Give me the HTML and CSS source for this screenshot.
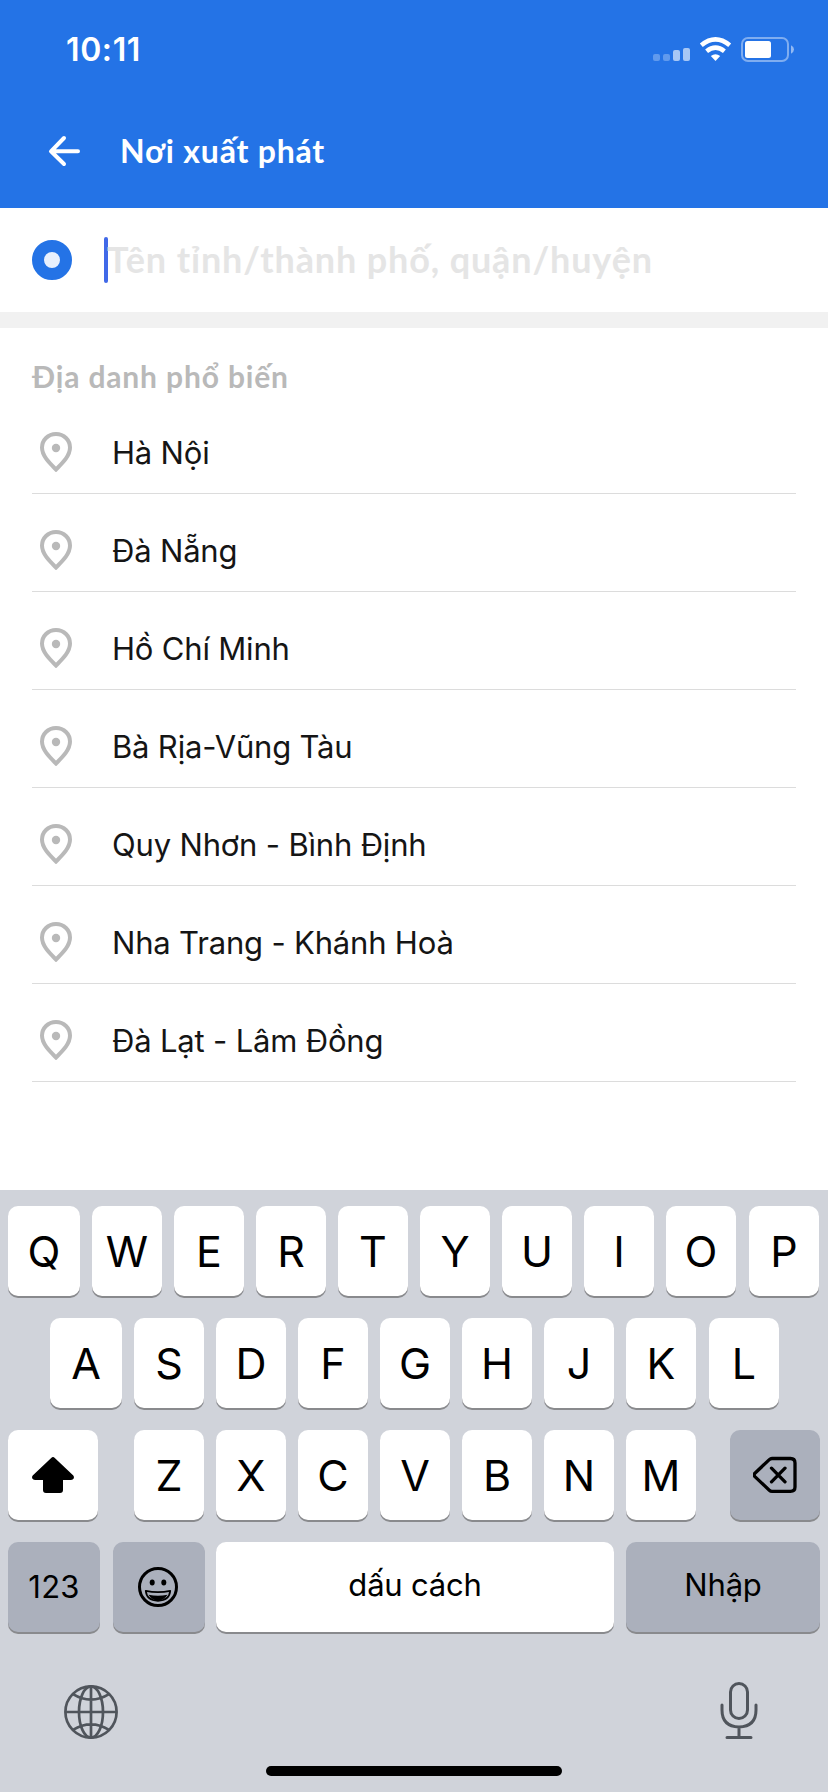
FILE: index.html
```html
<!DOCTYPE html>
<html lang="vi">
<head>
<meta charset="utf-8">
<title>Nơi xuất phát</title>
<link rel="stylesheet" href="styles.css">
</head>
<body>
<svg class="defs" aria-hidden="true">
  <symbol id="pin" viewBox="0 0 32 40">
    <path d="M16 2C8 2 2 8 2 15.600C2 24 9.500 31 16 37.500C22.500 31 30 24 30 15.600C30 8 24 2 16 2Z" fill="none" stroke="#b9b9b9" stroke-width="4"/>
    <circle cx="16" cy="16" r="4.200" fill="#b9b9b9"/>
  </symbol>
</svg>
<div class="screen">
  <header class="header">
    <div class="status">
      <span class="clock">10:11</span>
      <svg class="indicators" width="144" height="28" viewBox="0 0 144 28">
        <g fill="#fff">
          <rect x="1" y="18" width="7" height="7" rx="2" opacity=".28"/>
          <rect x="11" y="18" width="7" height="7" rx="2" opacity=".28"/>
          <rect x="21" y="14" width="7" height="11" rx="2" opacity=".6"/>
          <rect x="31" y="12" width="7" height="13" rx="2" opacity=".6"/>
        </g>
        <g fill="none" stroke="#fff" stroke-width="4.600">
          <path d="M49.300 9.300Q63.500-2.400 77.700 9.300"/>
          <path d="M54.600 15.200Q63.500 8 72.400 15.200"/>
        </g>
        <path d="M58.800 20Q63.500 16.600 68.200 20L63.500 25Z" fill="#fff"/>
        <rect x="90" y="2" width="46" height="23" rx="6" fill="none" stroke="#fff" stroke-width="2" opacity=".42"/>
        <rect x="93" y="5" width="26" height="17" rx="2.500" fill="#fff"/>
        <path d="M139 9.300Q142 10.800 142 13.500Q142 16.200 139 17.700Z" fill="#fff" opacity=".5"/>
      </svg>
    </div>
    <div class="titlebar">
      <svg class="back" width="34" height="32" viewBox="0 0 34 32" fill="none" stroke="#fff" stroke-width="4" stroke-linecap="round" stroke-linejoin="round">
        <path d="M16 3L3 16.300L16 29M3.500 16.300H30"/>
      </svg>
      <h1 class="title">Nơi xuất phát</h1>
    </div>
  </header>
  <section class="search">
    <span class="origin"></span>
    <span class="caret"></span>
    <span class="placeholder">Tên tỉnh/thành phố, quận/huyện</span>
  </section>
  <main class="places">
    <h2 class="section">Địa danh phổ biến</h2>
    <ul class="list">
      <li class="place"><svg class="pin"><use href="#pin"/></svg><span>Hà Nội</span></li>
      <li class="place"><svg class="pin"><use href="#pin"/></svg><span>Đà Nẵng</span></li>
      <li class="place"><svg class="pin"><use href="#pin"/></svg><span>Hồ Chí Minh</span></li>
      <li class="place"><svg class="pin"><use href="#pin"/></svg><span>Bà Rịa-Vũng Tàu</span></li>
      <li class="place"><svg class="pin"><use href="#pin"/></svg><span>Quy Nhơn - Bình Định</span></li>
      <li class="place"><svg class="pin"><use href="#pin"/></svg><span>Nha Trang - Khánh Hoà</span></li>
      <li class="place"><svg class="pin"><use href="#pin"/></svg><span>Đà Lạt - Lâm Đồng</span></li>
    </ul>
  </main>
  <section class="keyboard">
    <div class="keys">
      <span class="key first">Q</span><span class="key">W</span><span class="key">E</span><span class="key">R</span><span class="key">T</span><span class="key">Y</span><span class="key">U</span><span class="key">I</span><span class="key">O</span><span class="key last">P</span>
    </div>
    <div class="keys middle">
      <span class="key first">A</span><span class="key">S</span><span class="key">D</span><span class="key">F</span><span class="key">G</span><span class="key">H</span><span class="key">J</span><span class="key">K</span><span class="key last">L</span>
    </div>
    <div class="keys">
      <span class="key shift">
        <svg width="44" height="38" viewBox="0 0 44 38"><path d="M20.200 1.900Q22 .3 23.800 1.900L42.300 19.600Q43.500 21 42.700 22.600Q42 24 40 24H32V34Q32 37 29 37H15Q12 37 12 34V24H4Q2 24 1.300 22.600Q.5 21 1.700 19.600Z"/></svg>
      </span>
      <span class="key">Z</span><span class="key">X</span><span class="key">C</span><span class="key">V</span><span class="key">B</span><span class="key">N</span><span class="key">M</span>
      <span class="key dark delete">
        <svg width="44" height="38" viewBox="0 0 44 38" fill="none" stroke="#000" stroke-width="3.300" stroke-linecap="round" stroke-linejoin="round"><path d="M19 2.500H37.500Q42 2.500 42 7V31Q42 35.300 37.500 35.300H19Q17.500 35.300 16.300 34.200L1.900 20.600Q.4 18.900 1.900 17.200L16.300 3.600Q17.500 2.500 19 2.500ZM18.500 12.200L32 25.800M32 12.200L18.500 25.800"/></svg>
      </span>
    </div>
    <div class="keys">
      <span class="key dark label numbers">123</span>
      <span class="key dark emoji">
        <svg width="42" height="42" viewBox="0 0 42 42"><circle cx="21" cy="21" r="18.500" fill="none" stroke="#000" stroke-width="3"/><ellipse cx="15.200" cy="16.500" rx="2.500" ry="2.900"/><ellipse cx="26.800" cy="16.500" rx="2.500" ry="2.900"/><path d="M8.800 24.800Q21 27.500 33.200 24.800Q32.500 34.500 21 34.800Q9.500 34.500 8.800 24.800Z" fill="none" stroke="#000" stroke-width="1.800" stroke-linejoin="round"/><path d="M11.500 28.700Q21 31 30.500 28.700Q27 34.500 21 34.500Q15 34.500 11.500 28.700Z"/></svg>
      </span>
      <span class="key label space">dấu cách</span>
      <span class="key dark label enter">Nhập</span>
    </div>
    <div class="tools">
      <svg width="54" height="54" viewBox="0 0 54 54" fill="none" stroke="#50555c" stroke-width="2.700"><circle cx="27" cy="27" r="25.600"/><ellipse cx="27" cy="27" rx="12" ry="25.600"/><path d="M27 1.400V52.600M1.400 27H52.600M9 9.200Q27 20.200 45 9.200M9 44.800Q27 33.800 45 44.800"/></svg>
      <svg class="mic" width="38" height="58" viewBox="0 0 38 58" fill="none" stroke="#50555c" stroke-width="3" stroke-linecap="round"><rect x="10.500" y="2.500" width="17" height="35" rx="8.500"/><path d="M2 24V29Q2 45.500 19 46Q36 45.500 36 29V24M19 46V56M7 56.500H31"/></svg>
    </div>
    <div class="home"></div>
  </section>
</div>
</body>
</html>
```
FILE: styles.css
```css
* { box-sizing: border-box; }
body { margin: 0; background: #fff; font-family: Inter, "Liberation Sans", sans-serif; color: #151515; }
.defs { display: none; }
.screen { width: 828px; height: 1792px; display: flex; flex-direction: column; overflow: hidden; }
.screen svg { display: block; flex: none; }

.header { height: 208px; background: #2473e6; color: #fff; flex: none; }
.status { height: 100px; display: flex; justify-content: space-between; padding: 30px 32px 0 66px; }
.clock { font-size: 32px; line-height: 40px; font-weight: 600; letter-spacing: .6px; }
.indicators { margin-top: 6px; }
.titlebar { display: flex; padding: 35px 48px 0; }
.title { margin: -4px 0 0 38px; font: 700 32px/40px Lato, sans-serif; letter-spacing: .8px; white-space: nowrap; }

.search { height: 120px; flex: none; display: flex; border-bottom: 16px solid #f1f1f1; padding: 29px 32px 0; }
.origin { width: 40px; height: 40px; margin-top: 3px; border: 12px solid #2473e6; border-radius: 50%; background: #e8f0fd; }
.caret { width: 4px; height: 46px; margin-left: 32px; border-radius: 2px; background: #4169e8; }
.placeholder { margin: -1px 0 0 -1px; font: 700 36px/46px Lato, sans-serif; letter-spacing: .86px; color: #e5e5e5; white-space: nowrap; }

.places { height: 862px; flex: none; padding: 0 32px; }
.section { height: 68px; margin: 0; padding-top: 28px; font: 700 30px/40px Lato, sans-serif; letter-spacing: .85px; color: #b9b9b9; }
.list { list-style: none; margin: 0; padding: 0; }
.place { height: 98px; display: flex; padding: 36px 0 0 8px; border-bottom: 1px solid #dcdcdc; font-size: 31px; line-height: 42px; letter-spacing: -.18px; white-space: nowrap; }
.pin { width: 32px; height: 40px; margin-right: 40px; }

.keyboard { height: 602px; flex: none; background: #d0d3da; padding: 16px 8px 0; color: #000; }
.keys { display: flex; gap: 12px; height: 90px; margin-bottom: 22px; }
.middle { padding-left: 42px; }
.key { width: 70px; height: 90px; flex: none; display: flex; align-items: center; justify-content: center; border-radius: 10px; background: #fff; box-shadow: 0 2px 0 #898a8d; font-size: 43px; line-height: 50px; }
.first { width: 72px; }
.last { margin-left: 1px; }
.shift { width: 90px; margin-right: 24px; }
.dark { background: #abb0bc; }
.delete { width: 90px; margin-left: 22px; }
.label { font-size: 31px; letter-spacing: -.2px; white-space: nowrap; }
.numbers, .emoji { width: 92px; }
.numbers { letter-spacing: .2px; }
.emoji { margin-right: -1px; margin-left: 1px; padding-right: 2px; }
.space { width: 398px; padding-bottom: 5px; }
.enter { width: 194px; padding-bottom: 5px; }
.tools { height: 111px; display: flex; justify-content: space-between; padding: 31px 62px 0 56px; }
.mic { margin-top: -4px; }
.home { width: 296px; height: 10px; margin: 1px auto 0; border-radius: 5px; background: #000; }
```
